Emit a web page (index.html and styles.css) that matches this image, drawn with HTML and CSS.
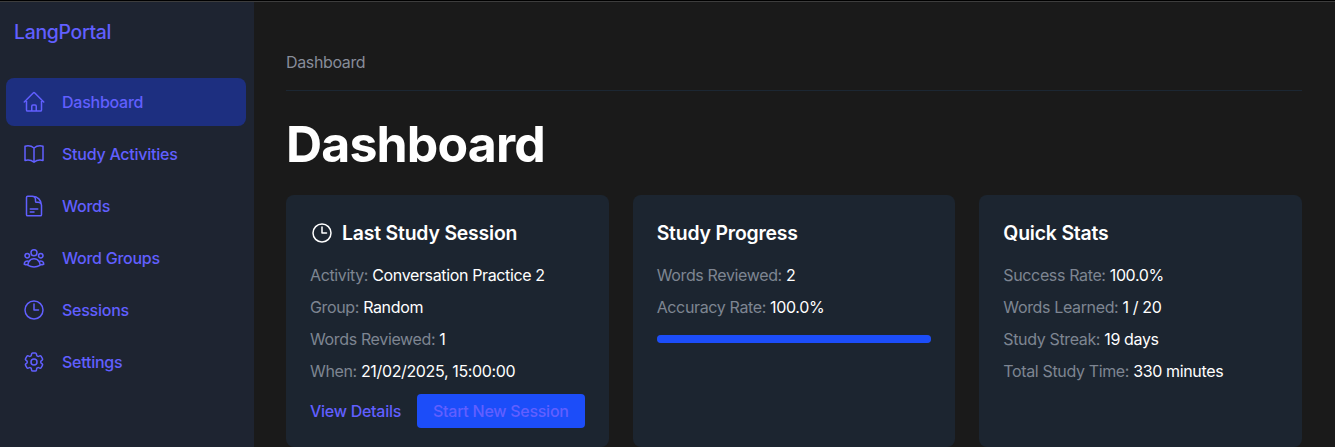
FILE: index.html
```html
<!DOCTYPE html>
<html lang="en">
<head>
<meta charset="utf-8">
<title>LangPortal</title>
<link rel="stylesheet" href="styles.css">
</head>
<body>
<div class="app">
  <aside class="sidebar">
    <a class="brand">LangPortal</a>
    <nav class="nav">
      <a class="nav-item active"><svg class="icon" viewBox="0 0 24 24"><path d="m2.25 12 8.954-8.955a1.126 1.126 0 0 1 1.591 0L21.75 12M4.5 9.75v10.125c0 .621.504 1.125 1.125 1.125H9.75v-4.875c0-.621.504-1.125 1.125-1.125h2.25c.621 0 1.125.504 1.125 1.125V21h4.125c.621 0 1.125-.504 1.125-1.125V9.75M8.25 21h8.25"/></svg><span>Dashboard</span></a>
      <a class="nav-item"><svg class="icon" viewBox="0 0 24 24"><path d="M12 6.042A8.967 8.967 0 0 0 6 3.75c-1.052 0-2.062.18-3 .512v14.25A8.987 8.987 0 0 1 6 18c2.305 0 4.408.867 6 2.292m0-14.25a8.966 8.966 0 0 1 6-2.292c1.052 0 2.062.18 3 .512v14.25A8.987 8.987 0 0 0 18 18a8.967 8.967 0 0 0-6 2.292m0-14.25v14.25"/></svg><span>Study Activities</span></a>
      <a class="nav-item"><svg class="icon" viewBox="0 0 24 24"><path d="M19.5 14.25v-2.625a3.375 3.375 0 0 0-3.375-3.375h-1.5A1.125 1.125 0 0 1 13.5 7.125v-1.5a3.375 3.375 0 0 0-3.375-3.375H8.25m0 12.75h7.5m-7.5 3H12M10.5 2.25H5.625c-.621 0-1.125.504-1.125 1.125v17.25c0 .621.504 1.125 1.125 1.125h12.75c.621 0 1.125-.504 1.125-1.125V11.25a9 9 0 0 0-9-9Z"/></svg><span>Words</span></a>
      <a class="nav-item"><svg class="icon" viewBox="0 0 24 24"><path d="M18 18.72a9.094 9.094 0 0 0 3.741-.479 3 3 0 0 0-4.682-2.72m.94 3.198.001.031c0 .225-.012.447-.037.666A11.944 11.944 0 0 1 12 21c-2.17 0-4.207-.576-5.963-1.584A6.062 6.062 0 0 1 6 18.719m12 0a5.971 5.971 0 0 0-.941-3.197m0 0A5.995 5.995 0 0 0 12 12.75a5.995 5.995 0 0 0-5.058 2.772m0 0a3 3 0 0 0-4.681 2.72 8.986 8.986 0 0 0 3.74.477m.94-3.197a5.971 5.971 0 0 0-.94 3.197M15 6.75a3 3 0 1 1-6 0 3 3 0 0 1 6 0Zm6 3a2.25 2.25 0 1 1-4.5 0 2.25 2.25 0 0 1 4.5 0Zm-13.5 0a2.25 2.25 0 1 1-4.5 0 2.25 2.25 0 0 1 4.5 0Z"/></svg><span>Word Groups</span></a>
      <a class="nav-item"><svg class="icon" viewBox="0 0 24 24"><path d="M12 6v6h4.5m4.5 0a9 9 0 1 1-18 0 9 9 0 0 1 18 0Z"/></svg><span>Sessions</span></a>
      <a class="nav-item"><svg class="icon" viewBox="0 0 24 24"><path d="M9.594 3.94c.09-.542.56-.94 1.11-.94h2.593c.55 0 1.02.398 1.11.94l.213 1.281c.063.374.313.686.645.87.074.04.147.083.22.127.325.196.72.257 1.075.124l1.217-.456a1.125 1.125 0 0 1 1.37.49l1.296 2.247a1.125 1.125 0 0 1-.26 1.431l-1.003.827c-.293.241-.438.613-.43.992a7.723 7.723 0 0 1 0 .255c-.008.378.137.75.43.991l1.004.827c.424.35.534.955.26 1.43l-1.298 2.247a1.125 1.125 0 0 1-1.369.491l-1.217-.456c-.355-.133-.75-.072-1.076.124a6.47 6.47 0 0 1-.22.128c-.331.183-.581.495-.644.869l-.213 1.281c-.09.543-.56.94-1.11.94h-2.594c-.55 0-1.019-.398-1.11-.94l-.213-1.281c-.062-.374-.312-.686-.644-.87a6.52 6.52 0 0 1-.22-.127c-.325-.196-.72-.257-1.076-.124l-1.217.456a1.125 1.125 0 0 1-1.369-.49l-1.297-2.247a1.125 1.125 0 0 1 .26-1.431l1.004-.827c.292-.24.437-.613.43-.991a6.932 6.932 0 0 1 0-.255c.007-.38-.138-.751-.43-.992l-1.004-.827a1.125 1.125 0 0 1-.26-1.43l1.297-2.247a1.125 1.125 0 0 1 1.37-.491l1.216.456c.356.133.751.072 1.076-.124.072-.044.146-.086.22-.128.332-.183.582-.495.644-.869l.214-1.28Z"/><path d="M15 12a3 3 0 1 1-6 0 3 3 0 0 1 6 0Z"/></svg><span>Settings</span></a>
    </nav>
  </aside>
  <main class="main">
    <div class="breadcrumb">Dashboard</div>
    <h1 class="title">Dashboard</h1>
    <div class="cards">
      <section class="card">
        <h2 class="card-title"><svg class="icon" viewBox="0 0 24 24"><path d="M12 6v6h4.5m4.5 0a9 9 0 1 1-18 0 9 9 0 0 1 18 0Z"/></svg>Last Study Session</h2>
        <div class="rows">
          <p class="row">Activity: <span class="value">Conversation Practice 2</span></p>
          <p class="row">Group: <span class="value">Random</span></p>
          <p class="row">Words Reviewed: <span class="value">1</span></p>
          <p class="row">When: <span class="value">21/02/2025, 15:00:00</span></p>
        </div>
        <div class="actions"><a class="link">View Details</a><a class="button">Start New Session</a></div>
      </section>
      <section class="card">
        <h2 class="card-title">Study Progress</h2>
        <div class="rows">
          <p class="row">Words Reviewed: <span class="value">2</span></p>
          <p class="row">Accuracy Rate: <span class="value">100.0%</span></p>
        </div>
        <div class="track"><div class="fill" style="width:100%"></div></div>
      </section>
      <section class="card">
        <h2 class="card-title">Quick Stats</h2>
        <div class="rows">
          <p class="row">Success Rate: <span class="value">100.0%</span></p>
          <p class="row">Words Learned: <span class="value">1 / 20</span></p>
          <p class="row">Study Streak: <span class="value">19 days</span></p>
          <p class="row">Total Study Time: <span class="value">330 minutes</span></p>
        </div>
      </section>
    </div>
  </main>
</div>
</body>
</html>
```
FILE: styles.css
```css
* { box-sizing: border-box; margin: 0; padding: 0; }
body {
  height: 447px;
  overflow: hidden;
  border-top: 1px solid #000;
  background: #1a1a1a;
  color: #fff;
  font: 400 16px/24px Inter, sans-serif;
  letter-spacing: -0.36px;
}
.app { display: flex; height: 446px; border-top: 1px solid #3d3d3d; }
.sidebar { width: 254px; flex: none; background: #1e2431; color: #615fff; font-weight: 500; letter-spacing: -0.25px; }
.brand { display: block; padding: 16px 14px 0; font-size: 19.4px; line-height: 28px; letter-spacing: -0.3px; }
.nav { display: flex; flex-direction: column; gap: 4px; padding: 32px 8px 0 6px; }
.nav-item { display: flex; align-items: center; gap: 16px; height: 48px; padding: 0 16px; border-radius: 8px; }
.nav-item.active { background: #1d2f80; }
.icon { width: 24px; height: 24px; flex: none; fill: none; stroke: currentColor; stroke-width: 1.5; stroke-linecap: round; stroke-linejoin: round; }
.main { flex: 1; padding: 32px 33px 0 32px; }
.breadcrumb { padding: 16px 0; border-bottom: 1px solid #1c2733; color: #878c99; }
.title { padding-top: 25px; font-size: 50px; line-height: 56px; font-weight: 700; letter-spacing: -0.85px; }
.cards { display: grid; grid-template-columns: repeat(3, minmax(0, 1fr)); gap: 24px; margin-top: 23px; }
.card { height: 252px; padding: 24px; border-radius: 8px; background: #1c2530; }
.card-title { display: flex; align-items: center; gap: 8px; font-size: 19.4px; line-height: 28px; font-weight: 600; letter-spacing: -0.18px; }
.rows { display: flex; flex-direction: column; gap: 8px; margin-top: 16px; }
.row { color: #7e8592; white-space: nowrap; }
.value { color: #fff; }
.actions { display: flex; align-items: center; gap: 16px; margin-top: 11px; font-weight: 500; letter-spacing: -0.27px; color: #615fff; white-space: nowrap; }
.button { height: 34px; padding: 5px 16px; border-radius: 4px; background: #1c4df9; }
.track { height: 8px; margin-top: 16px; border-radius: 4px; background: #364153; }
.fill { height: 8px; border-radius: 4px; background: #1c4df9; }
```
